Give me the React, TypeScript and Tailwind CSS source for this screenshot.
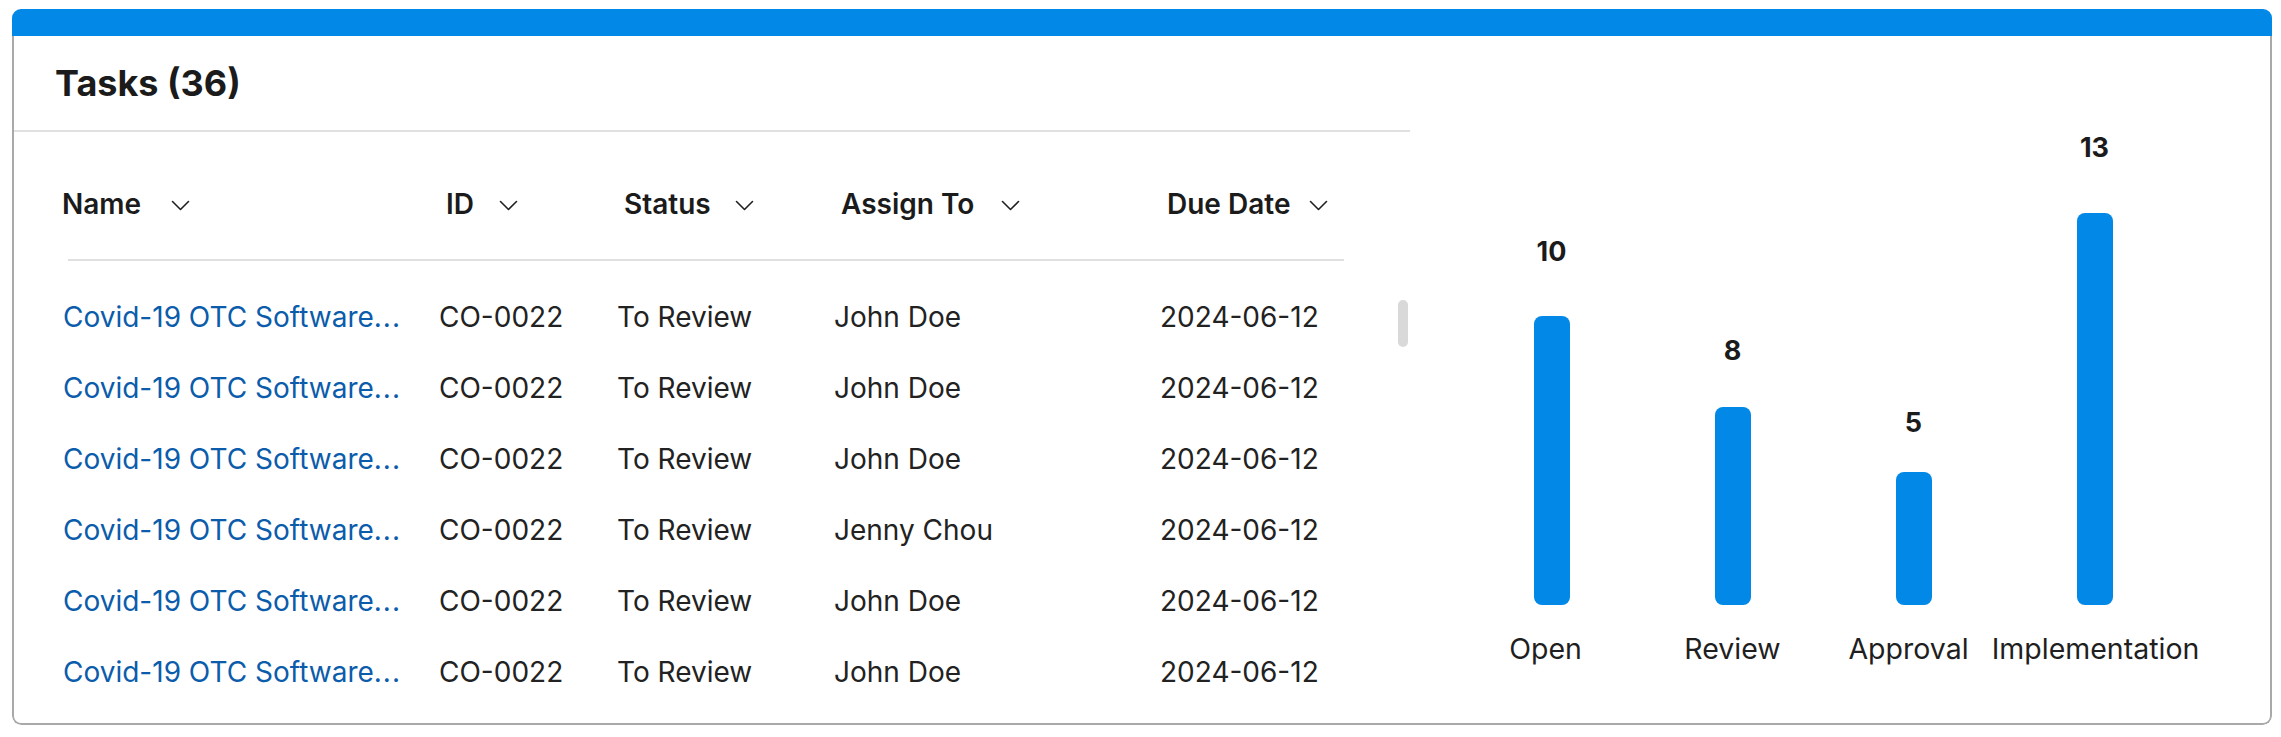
import React from "react";

const rows = [
  { assign: "John Doe" },
  { assign: "John Doe" },
  { assign: "John Doe" },
  { assign: "Jenny Chou" },
  { assign: "John Doe" },
  { assign: "John Doe" },
];

const bars = [
  { label: "Open", value: 10, h: 289, gap: 47, shift: -6 },
  { label: "Review", value: 8, h: 198, gap: 39, shift: 0 },
  { label: "Approval", value: 5, h: 133, gap: 32, shift: -5 },
  { label: "Implementation", value: 13, h: 392, gap: 48, shift: 1 },
];

function Chevron() {
  return (
    <svg width="19" height="11" viewBox="0 0 19 11" fill="none" stroke="#1f1f1f" strokeWidth="1.6" strokeLinecap="round" strokeLinejoin="round">
      <path d="M1.5 1.5 L9.5 9.5 L17.5 1.5" />
    </svg>
  );
}

function HeaderCell({ label, w, first }: { label: string; w: string; first?: boolean }) {
  return (
    <div className={first ? "flex items-center" : "flex items-center pl-[7px]"}>
      <span className={"text-[28px] leading-[34px] font-semibold text-[#1b1b1b] whitespace-nowrap " + w}>{label}</span>
      <span className="mt-[3px]"><Chevron /></span>
    </div>
  );
}

export default function App() {
  return (
    <div className="w-[2281px] h-[737px] bg-white pt-[9px] pl-[12px] font-['Inter',sans-serif]">
      <div className="w-[2260px] h-[716px] rounded-[9px] overflow-hidden flex flex-col">
        <div className="h-[27px] shrink-0 bg-[#0288e6]" />
        <div className="flex-1 flex border-x-2 border-b-2 border-[#a9a9a9] rounded-b-[9px] overflow-hidden">
          {/* Table section */}
          <div className="relative w-[1396px] shrink-0 flex flex-col">
            <div className="h-[96px] shrink-0 border-b-2 border-[#e0e0e0] flex items-center pl-[41px]">
              <h2 className="text-[36px] leading-[44px] font-bold text-[#1b1b1b]">Tasks (36)</h2>
            </div>
            <div className="pt-[55px] pb-[38px] pl-[48px] grid grid-cols-[377px_178px_217px_326px_1fr]">
              <HeaderCell label="Name" w="w-[109px]" first />
              <HeaderCell label="ID" w="w-[53px]" />
              <HeaderCell label="Status" w="w-[111px]" />
              <HeaderCell label="Assign To" w="w-[160px]" />
              <HeaderCell label="Due Date" w="w-[142px]" />
            </div>
            <div className="ml-[54px] w-[1276px] h-[2px] bg-[#e0e0e0]" />
            <div className="pt-[20px] pl-[49px] flex flex-col">
              {rows.map((r, i) => (
                <div key={i} className="h-[71px] shrink-0 grid grid-cols-[376px_178px_217px_326px_1fr] items-center text-[28px] leading-[36px] text-[#222222]">
                  <span className="text-[#0b5cab] whitespace-nowrap">
                    Covid-19 OTC Software<span className="tracking-[1px]">...</span>
                  </span>
                  <span>CO-0022</span>
                  <span>To Review</span>
                  <span>{r.assign}</span>
                  <span>2024-06-12</span>
                </div>
              ))}
            </div>
            <div className="absolute right-[2px] top-[264px] w-[10px] h-[47px] rounded-full bg-[#d9d9d9]" />
          </div>
          {/* Chart section */}
          <div className="flex-1 flex items-start pl-[51px]">
            {bars.map((b) => (
              <div key={b.label} className="w-[181px] h-[630px] flex flex-col items-center justify-end">
                <span className="text-[27px] leading-[34px] font-bold text-[#1b1b1b]" style={{ marginBottom: b.gap }}>
                  {b.value}
                </span>
                <div className="w-[36px] rounded-[8px] bg-[#0288e6]" style={{ height: b.h }} />
                <span
                  className="mt-[27px] text-[28.5px] leading-[34px] text-[#1f1f1f] whitespace-nowrap"
                  style={{ marginLeft: b.shift * 2 }}
                >
                  {b.label}
                </span>
              </div>
            ))}
          </div>
        </div>
      </div>
    </div>
  );
}
